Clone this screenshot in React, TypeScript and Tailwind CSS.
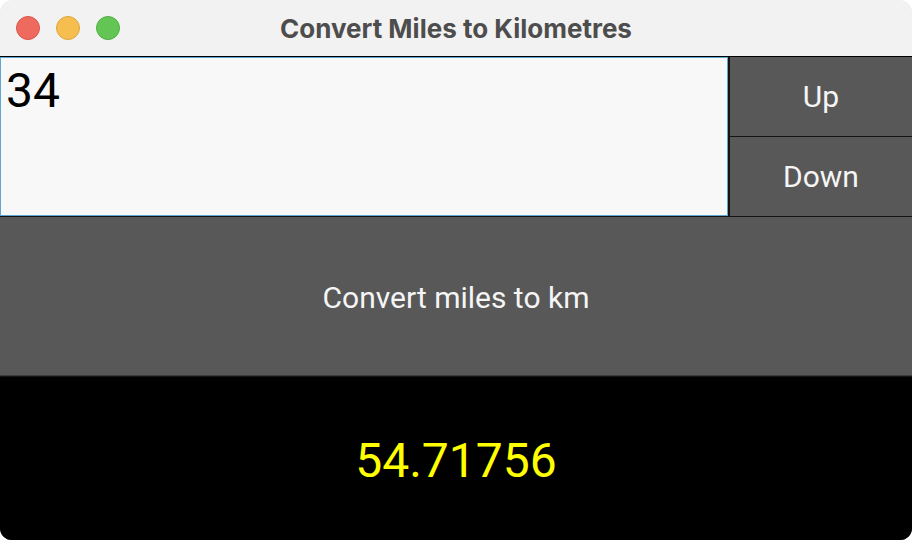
export default function App() {
  return (
    <div className="w-[912px] h-[540px] bg-white" style={{ fontFamily: 'Roboto, "Noto Sans", sans-serif' }}>
      <div className="flex h-full flex-col overflow-hidden rounded-[12px]">
        {/* title bar */}
        <div className="grid h-[57px] shrink-0 grid-cols-[1fr_auto_1fr] items-center border-b border-black bg-[#f2f2f2]">
          <div className="flex items-center gap-4 pl-4">
            <span className="h-6 w-6 rounded-full border border-[#d9574c] bg-[#ee6a5f]" />
            <span className="h-6 w-6 rounded-full border border-[#dba63e] bg-[#f5be4f]" />
            <span className="h-6 w-6 rounded-full border border-[#52ad45] bg-[#62c554]" />
          </div>
          <div className="text-[26px] font-bold text-[#4d4d4d]" style={{ fontFamily: 'Inter, "Noto Sans", sans-serif' }}>
            Convert Miles to Kilometres
          </div>
          <div />
        </div>

        {/* body */}
        <div className="flex flex-1 flex-col gap-px bg-[#141414]">
          <div className="flex h-[159px] shrink-0 gap-[2px]">
            <div className="w-[728px] border border-[#5ea7d0] bg-[#f8f8f8] pl-[5px] pt-[9px] text-[48px] leading-none text-black">
              34
            </div>
            <div className="flex flex-1 flex-col gap-px">
              <button className="flex-1 bg-[#585858] text-[30px] text-[#f5f5f5]">Up</button>
              <button className="flex-1 bg-[#585858] text-[30px] text-[#f5f5f5]">Down</button>
            </div>
          </div>
          <button className="h-[159px] shrink-0 border-b border-[#3c3c3c] bg-[#585858] pt-[3px] text-[30px] text-[#f5f5f5]">
            Convert miles to km
          </button>
          <div className="flex flex-1 items-center justify-center bg-black pt-[4px] text-[48px] text-[#ffff00]">
            54.71756
          </div>
        </div>
      </div>
    </div>
  );
}
